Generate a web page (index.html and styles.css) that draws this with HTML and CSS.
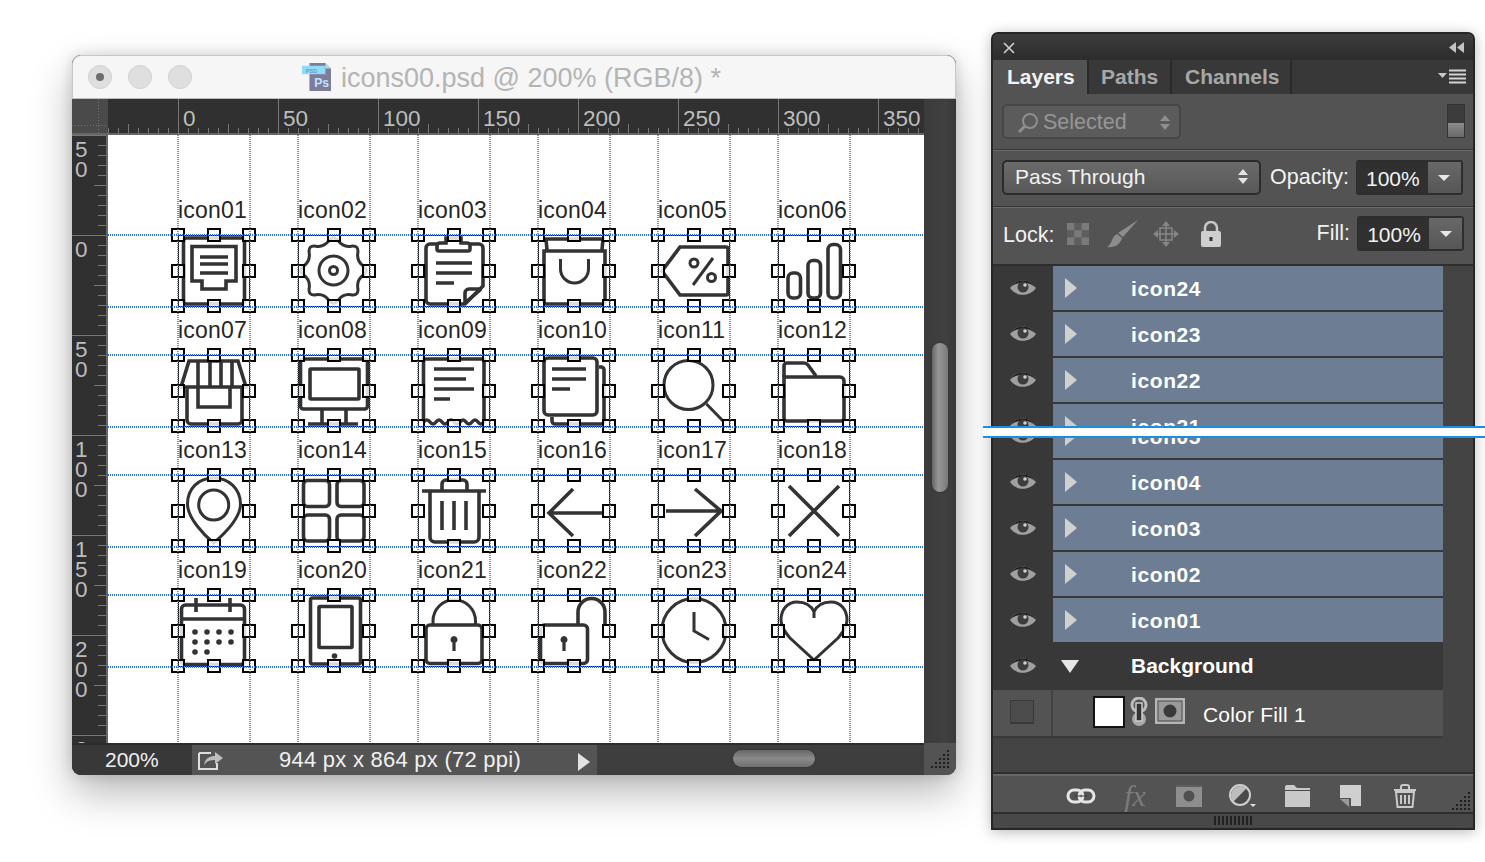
FILE: index.html
```html
<!DOCTYPE html>
<html lang="en">
<head>
    <meta charset="UTF-8">
    <title>icons00.psd</title>
    <link rel="stylesheet" href="styles.css">
</head>
<body>
    <!-- shared shapes -->
    <svg class="defs" width="0" height="0">
        <defs>
            <g id="handles" class="handles">
                <rect x="-6" y="-6" width="12" height="12"/><rect x="30" y="-6" width="12" height="12"/><rect x="65" y="-6" width="12" height="12"/>
                <rect x="-6" y="30" width="12" height="12"/><rect x="65" y="30" width="12" height="12"/>
                <rect x="-6" y="65" width="12" height="12"/><rect x="30" y="65" width="12" height="12"/><rect x="65" y="65" width="12" height="12"/>
            </g>
            <g id="eye">
                <path d="M0 10 C6 0 20 0 26 10 C20 19 6 19 0 10Z" fill="#a0a0a0"/>
                <path d="M0 10 C6 0 20 0 26 10 C20 3 6 3 0 10Z" fill="#1e1e1e"/>
                <circle cx="13" cy="9" r="5.5" fill="#3d3d3d"/>
                <circle cx="15" cy="7" r="1.8" fill="#d0d0d0"/>
            </g>
            <path id="updown" d="M5 0 L10 6 H0Z M0 9 H10 L5 15Z"/>
            <path id="caret" d="M0 0 H12 L6 6Z"/>
        </defs>
    </svg>

    <div class="doc">
        <div class="titlebar">
            <div class="traffic"><span class="light on"></span><span class="light"></span><span class="light"></span></div>
            <div class="doc-title">
                <svg class="psd" width="30" height="30" viewBox="0 0 32 32">
                    <path d="M9 1 H26 L32 7 V31 H9Z" fill="#7f7c9a"/>
                    <path d="M26 1 L32 7 H26Z" fill="#bcd9ee"/>
                    <rect x="1" y="4" width="25" height="9" fill="#8edcfa"/>
                    <text x="5" y="11.5" class="psd-small">PSD</text>
                    <text x="14" y="27" class="psd-big">Ps</text>
                </svg>
                <span>icons00.psd @ 200% (RGB/8) *</span>
            </div>
            <div></div>
        </div>

        <div class="workspace">
            <div class="ruler-corner"></div>
            <div class="ruler-top">
                <span>0</span><span>50</span><span>100</span><span>150</span><span>200</span><span>250</span><span>300</span><span>350</span>
            </div>
            <div class="vscroll"><div class="vthumb"></div></div>

            <div class="ruler-left">
                <div>5<br>0</div>
                <div>0</div>
                <div>5<br>0</div>
                <div>1<br>0<br>0</div>
                <div>1<br>5<br>0</div>
                <div>2<br>0<br>0</div>
                <div>2</div>
            </div>

            <div class="canvas">
                <div class="icons">
                    <div class="cell"><div class="label">icon01</div>
                        <svg class="ico" viewBox="0 0 72 72"><rect x="5.5" y="3" width="61" height="66" rx="3"/><path d="M14 11.5 H58 V46 H48 V54 H24 V46 H14Z"/><path d="M22 22 H50 M22 29 H50 M22 38 H50"/><use href="#handles"/></svg></div>
                    <div class="cell"><div class="label">icon02</div>
                        <svg class="ico thin" viewBox="0 0 72 72"><path d="M65.05 40.3 Q58.6 45.1 59.8 53.05 Q61 61 53.05 59.8 Q45.1 58.6 40.3 65.05 Q35.5 71.5 30.7 65.05 Q25.9 58.6 17.95 59.8 Q10 61 11.2 53.05 Q12.4 45.1 5.95 40.3 Q-.5 35.5 5.95 30.7 Q12.4 25.9 11.2 17.95 Q10 10 17.95 11.2 Q25.9 12.4 30.7 5.95 Q35.5 -.5 40.3 5.95 Q45.1 12.4 53.05 11.2 Q61 10 59.8 17.95 Q58.6 25.9 65.05 30.7 Q71.5 35.5 65.05 40.3Z"/><circle cx="35.5" cy="35.5" r="14.5"/><circle cx="35.5" cy="35.5" r="4"/><use href="#handles"/></svg></div>
                    <div class="cell"><div class="label">icon03</div>
                        <svg class="ico" viewBox="0 0 72 72"><path d="M19 9 H12 a4 4 0 0 0 -4 4 V65 a4 4 0 0 0 4 4 H47 L65 51 V13 a4 4 0 0 0 -4 -4 H52"/><path d="M28 3 H43 V8 H49 a3 3 0 0 1 3 3 V14 a2 2 0 0 1 -2 2 H21 a2 2 0 0 1 -2 -2 V11 a3 3 0 0 1 3 -3 H28Z"/><path d="M18 28 H54 M18 38 H54 M18 48 H36"/><path d="M47 69 V58 a4 4 0 0 1 4 -4 H64 M48 67 L62 55"/><use href="#handles"/></svg></div>
                    <div class="cell"><div class="label">icon04</div>
                        <svg class="ico" viewBox="0 0 72 72"><path d="M6 16 H67 V66 a3 3 0 0 1 -3 3 H9 a3 3 0 0 1 -3 -3Z"/><path d="M9 15 L8 4 H65 L64 15"/><path class="hair" d="M22.5 24 V34 a14 14 0 0 0 28 0 V24"/><use href="#handles"/></svg></div>
                    <div class="cell"><div class="label">icon05</div>
                        <svg class="ico" viewBox="0 0 72 72"><path d="M4 36 L22 12 H68 a2 2 0 0 1 2 2 V58 a2 2 0 0 1 -2 2 H22Z"/><circle class="hair" cx="36" cy="28" r="4"/><circle class="hair" cx="53.5" cy="42.5" r="4"/><path class="hair" d="M55 23 L35 50"/><use href="#handles"/></svg></div>
                    <div class="cell"><div class="label">icon06</div>
                        <svg class="ico" viewBox="0 0 72 72"><rect x="10" y="38" width="12.5" height="25" rx="5"/><rect x="30" y="25.5" width="12.5" height="37.5" rx="5"/><rect x="50" y="9.5" width="12.5" height="53.5" rx="5"/><use href="#handles"/></svg></div>

                    <div class="cell"><div class="label">icon07</div>
                        <svg class="ico" viewBox="0 0 72 72"><path d="M3 32 L11 6 H60 L68 32Z"/><path d="M20 6 V32 M32 6 V32 M43 6 V32 M54 6 V32"/><path d="M9 32 V65 a4 4 0 0 0 4 4 H60 a4 4 0 0 0 4 -4 V32"/><path d="M20 33 V52 H52 V33"/><use href="#handles"/></svg></div>
                    <div class="cell"><div class="label">icon08</div>
                        <svg class="ico" viewBox="0 0 72 72"><rect x="2.5" y="4" width="67" height="50" rx="3"/><rect x="12" y="14" width="49" height="30" rx="1"/><path d="M24 54 V68 M48 54 V68 M10 69 H60"/><use href="#handles"/></svg></div>
                    <div class="cell"><div class="label">icon09</div>
                        <svg class="ico" viewBox="0 0 72 72"><path d="M5.5 67 V4 H66 V67 Q63 71 60 67 T54 67 T48 67 T42 67 T36 67 T30 67 T24 67 T18 67 T12 67 T5.5 67"/><path d="M16 14 H56 M16 24 H48 M16 34 H56 M16 44 H32"/><use href="#handles"/></svg></div>
                    <div class="cell"><div class="label">icon10</div>
                        <svg class="ico" viewBox="0 0 72 72"><rect x="6" y="3" width="53" height="57" rx="4"/><path d="M61 12 H63 a3 3 0 0 1 3 3 V66 a3 3 0 0 1 -3 3 H17 a3 3 0 0 1 -3 -3 V62"/><path d="M14 14 H48 M14 24 H48 M14 34 H32"/><use href="#handles"/></svg></div>
                    <div class="cell"><div class="label">icon11</div>
                        <svg class="ico thin" viewBox="0 0 72 72"><circle cx="30.5" cy="30" r="24.5"/><path d="M48.5 49 L65.5 66.5"/><use href="#handles"/></svg></div>
                    <div class="cell"><div class="label">icon12</div>
                        <svg class="ico" viewBox="0 0 72 72"><path d="M6 22 H62 a4 4 0 0 1 4 4 V63 a3 3 0 0 1 -3 3 H9 a3 3 0 0 1 -3 -3Z"/><path d="M6 22 V11 a3 3 0 0 1 3 -3 H26 a5 5 0 0 1 4 2 L38 21"/><use href="#handles"/></svg></div>

                    <div class="cell"><div class="label">icon13</div>
                        <svg class="ico thin" viewBox="0 0 72 72"><path d="M35.7 3 C20 3 9.5 14 9.5 29 C9.5 43 26 60 35.7 68 C45 60 62.5 43 62.5 29 C62.5 14 51 3 35.7 3Z"/><circle cx="35.7" cy="30" r="15"/><use href="#handles"/></svg></div>
                    <div class="cell"><div class="label">icon14</div>
                        <svg class="ico" viewBox="0 0 72 72"><rect x="5.5" y="5.5" width="26" height="26" rx="4"/><rect x="39" y="5.5" width="27" height="26" rx="4"/><rect x="5.5" y="40" width="26" height="26" rx="4"/><rect x="39" y="40" width="27" height="26" rx="4"/><use href="#handles"/></svg></div>
                    <div class="cell"><div class="label">icon15</div>
                        <svg class="ico" viewBox="0 0 72 72"><path d="M4 16 H68"/><path d="M24 15 V9 a4 4 0 0 1 4 -4 H45 a4 4 0 0 1 4 4 V15"/><path d="M12 16 V62 a5 5 0 0 0 5 5 H56 a5 5 0 0 0 5 -5 V16"/><path d="M24 26 V55 M36 26 V55 M48 26 V55"/><use href="#handles"/></svg></div>
                    <div class="cell"><div class="label">icon16</div>
                        <svg class="ico" viewBox="0 0 72 72"><path d="M64 38 H11 M35 14 L11 38 L35 61"/><use href="#handles"/></svg></div>
                    <div class="cell"><div class="label">icon17</div>
                        <svg class="ico" viewBox="0 0 72 72"><path d="M8 36 H63 M37 14 L63 36 L37 61"/><use href="#handles"/></svg></div>
                    <div class="cell"><div class="label">icon18</div>
                        <svg class="ico" viewBox="0 0 72 72"><path d="M11 11 L61 61 M61 11 L11 61"/><use href="#handles"/></svg></div>

                    <div class="cell"><div class="label">icon19</div>
                        <svg class="ico" viewBox="0 0 72 72"><rect x="3.5" y="10" width="63" height="59.5" rx="4"/><path d="M3.5 24 H66.5 M18 3 V17 M52 3 V17"/><g class="solid"><circle cx="17" cy="37" r="2.8"/><circle cx="29" cy="37" r="2.8"/><circle cx="41" cy="37" r="2.8"/><circle cx="53" cy="37" r="2.8"/><circle cx="17" cy="47" r="2.8"/><circle cx="29" cy="47" r="2.8"/><circle cx="41" cy="47" r="2.8"/><circle cx="53" cy="47" r="2.8"/><circle cx="17" cy="57" r="2.8"/><circle cx="29" cy="57" r="2.8"/></g><use href="#handles"/></svg></div>
                    <div class="cell"><div class="label">icon20</div>
                        <svg class="ico" viewBox="0 0 72 72"><rect x="12.5" y="3" width="50" height="66" rx="2"/><rect x="21" y="11.5" width="33" height="41" rx="1"/><circle class="solid" cx="36.5" cy="61" r="2.8"/><use href="#handles"/></svg></div>
                    <div class="cell"><div class="label">icon21</div>
                        <svg class="ico" viewBox="0 0 72 72"><rect x="8" y="30" width="56" height="38.5" rx="4"/><path class="hair" d="M15 30 V26 a21 21 0 0 1 42.5 0 V30"/><path class="solid" d="M36 41 a3.5 3.5 0 0 1 1.6 6.6 V56 H34.4 V47.6 A3.5 3.5 0 0 1 36 41Z"/><use href="#handles"/></svg></div>
                    <div class="cell"><div class="label">icon22</div>
                        <svg class="ico" viewBox="0 0 72 72"><rect x="2.5" y="30" width="47" height="38.5" rx="4"/><path d="M40 30 V17 a13.5 13.5 0 0 1 27 0 V30"/><path class="solid" d="M26 41 a3.5 3.5 0 0 1 1.6 6.6 V56 H24.4 V47.6 A3.5 3.5 0 0 1 26 41Z"/><use href="#handles"/></svg></div>
                    <div class="cell"><div class="label">icon23</div>
                        <svg class="ico thin" viewBox="0 0 72 72"><circle cx="36" cy="35.5" r="32"/><path d="M36 17 V36 L51 44.5"/><use href="#handles"/></svg></div>
                    <div class="cell"><div class="label">icon24</div>
                        <svg class="ico thin" viewBox="0 0 72 72"><path d="M36 17 C33 10 26 7 19 7 C9 7 3 15 3 25 C3 33 8 38 12 43 L36 65 L60 43 C64 38 69 33 69 25 C69 15 63 7 53 7 C46 7 39 10 36 17 V23"/><use href="#handles"/></svg></div>
                </div>

                <svg class="guides" width="816" height="608">
                    <path class="guide-v" d="M70 0 V608 M142 0 V608 M190 0 V608 M262 0 V608 M310 0 V608 M382 0 V608 M430 0 V608 M502 0 V608 M550 0 V608 M622 0 V608 M670 0 V608 M742 0 V608"/>
                    <path class="guide-h" d="M0 100 H816 M0 172 H816 M0 220 H816 M0 292 H816 M0 340 H816 M0 412 H816 M0 460 H816 M0 532 H816"/>
                </svg>
            </div>

            <div class="status">
                <div class="zoom">200%</div>
                <div class="info">
                    <svg width="26" height="22" viewBox="0 0 26 22" class="share">
                        <path d="M1 4 H13 M1 4 V20 H19 V14" fill="none" stroke="#ddd" stroke-width="2"/>
                        <path d="M6 16 C7 9 12 7 17 7 V3 L25 9 L17 15 V11 C12 11 9 12 6 16Z" fill="#bdbdbd"/>
                    </svg>
                    <span class="size">944 px x 864 px (72 ppi)</span>
                    <svg width="12" height="18" viewBox="0 0 12 18" class="play"><path d="M0 0 L12 9 L0 18Z" fill="#e2e2e2"/></svg>
                </div>
                <div class="hscroll"><div class="hthumb"></div></div>
            </div>
            <div class="status-corner">
                <svg width="20" height="20" viewBox="0 0 20 20"><path d="M17 1h2v2h-2z M13 5h2v2h-2z M17 5h2v2h-2z M9 9h2v2H9z M13 9h2v2h-2z M17 9h2v2h-2z M5 13h2v2H5z M9 13h2v2H9z M13 13h2v2h-2z M17 13h2v2h-2z M1 17h2v2H1z M5 17h2v2H5z M9 17h2v2H9z M13 17h2v2h-2z M17 17h2v2h-2z" fill="#1f1f1f"/></svg>
            </div>
        </div>
    </div>

    <div class="panel">
        <div class="panel-top">
            <svg width="12" height="12" viewBox="0 0 12 12"><path d="M1 1 L11 11 M11 1 L1 11" stroke="#d0d0d0" stroke-width="1.6"/></svg>
            <svg width="15" height="11" viewBox="0 0 15 11"><path d="M7 0 V11 L0 5.5Z M15 0 V11 L8 5.5Z" fill="#c4c4c4"/></svg>
        </div>
        <div class="tabs">
            <div class="tab active">Layers</div>
            <div class="tab">Paths</div>
            <div class="tab">Channels</div>
            <svg class="panel-menu" width="29" height="16" viewBox="0 0 29 16"><path d="M0 4 H9 L4.5 9Z" fill="#c8c8c8"/><path d="M11 1.5 H28 M11 5.5 H28 M11 9.5 H28 M11 13.5 H28" stroke="#d4d4d4" stroke-width="2"/></svg>
        </div>

        <div class="filter-row">
            <div class="select kind">
                <svg width="22" height="22" viewBox="0 0 22 22"><circle cx="13" cy="9" r="7" fill="none" stroke="#8e8e8e" stroke-width="2"/><path d="M8 14 L2 20" stroke="#8e8e8e" stroke-width="3"/></svg>
                <span>Selected</span>
                <svg class="updown" width="10" height="15" viewBox="0 0 10 15"><use href="#updown"/></svg>
            </div>
            <div class="filter-switch"><div></div></div>
        </div>

        <div class="opts blend-row">
            <div class="select blend">
                <span>Pass Through</span>
                <svg class="updown" width="10" height="15" viewBox="0 0 10 15"><use href="#updown"/></svg>
            </div>
            <span class="opt-label">Opacity:</span>
            <div class="percent"><div class="value">100%</div><div class="drop"><svg width="12" height="6" viewBox="0 0 12 6"><use href="#caret"/></svg></div></div>
        </div>

        <div class="opts lock-row">
            <span class="opt-label lock-label">Lock:</span>
            <div class="lock-icons">
                <svg width="22" height="22" viewBox="0 0 22 22"><rect width="22" height="22" fill="#7a7a7a"/><path d="M7.3 0 H14.6 V7.3 H7.3Z M0 7.3 H7.3 V14.6 H0Z M14.6 7.3 H22 V14.6 H14.6Z M7.3 14.6 H14.6 V22 H7.3Z" fill="#5e5e5e"/></svg>
                <svg width="32" height="28" viewBox="0 0 32 28"><path d="M31 0 L16 17 L11 13Z" fill="#8d8d8d"/><path d="M10 14 L15 18 C13 25 7 28 0 27 C5 25 4 17 10 14Z" fill="#8d8d8d"/></svg>
                <svg width="28" height="28" viewBox="0 0 28 28"><path d="M14 1 L18 6 H10Z M14 27 L18 22 H10Z M1 14 L6 10 V18Z M27 14 L22 10 V18Z" fill="#868686"/><path d="M14 5 V23 M5 14 H23" stroke="#868686" stroke-width="1.5"/><rect x="8" y="8" width="12" height="12" fill="none" stroke="#868686" stroke-width="1.5"/></svg>
                <svg width="20" height="26" viewBox="0 0 20 26"><path d="M4 11 V7 a6 6 0 0 1 12 0 V11" fill="none" stroke="#c8c8c8" stroke-width="2.5"/><rect y="10" width="20" height="16" rx="2" fill="#cfcfcf"/><rect x="8.5" y="16" width="3" height="4" fill="#333"/></svg>
            </div>
            <span class="opt-label fill-label">Fill:</span>
            <div class="percent"><div class="value">100%</div><div class="drop"><svg width="12" height="6" viewBox="0 0 12 6"><use href="#caret"/></svg></div></div>
        </div>

        <div class="layers">
            <div class="row"><div class="vis"><svg width="26" height="19" viewBox="0 0 26 19"><use href="#eye"/></svg></div><div class="name"><i class="arrow"></i><b>icon24</b></div></div>
            <div class="row"><div class="vis"><svg width="26" height="19" viewBox="0 0 26 19"><use href="#eye"/></svg></div><div class="name"><i class="arrow"></i><b>icon23</b></div></div>
            <div class="row"><div class="vis"><svg width="26" height="19" viewBox="0 0 26 19"><use href="#eye"/></svg></div><div class="name"><i class="arrow"></i><b>icon22</b></div></div>
            <div class="row cut-upper"><div class="vis"><svg width="26" height="19" viewBox="0 0 26 19"><use href="#eye"/></svg></div><div class="name"><i class="arrow"></i><b>icon21</b></div></div>
            <div class="seam"></div>
            <div class="row cut-lower"><div class="vis"><svg width="26" height="19" viewBox="0 0 26 19"><use href="#eye"/></svg></div><div class="name"><i class="arrow"></i><b>icon05</b></div></div>
            <div class="row"><div class="vis"><svg width="26" height="19" viewBox="0 0 26 19"><use href="#eye"/></svg></div><div class="name"><i class="arrow"></i><b>icon04</b></div></div>
            <div class="row"><div class="vis"><svg width="26" height="19" viewBox="0 0 26 19"><use href="#eye"/></svg></div><div class="name"><i class="arrow"></i><b>icon03</b></div></div>
            <div class="row"><div class="vis"><svg width="26" height="19" viewBox="0 0 26 19"><use href="#eye"/></svg></div><div class="name"><i class="arrow"></i><b>icon02</b></div></div>
            <div class="row"><div class="vis"><svg width="26" height="19" viewBox="0 0 26 19"><use href="#eye"/></svg></div><div class="name"><i class="arrow"></i><b>icon01</b></div></div>
            <div class="row group"><div class="vis"><svg width="26" height="19" viewBox="0 0 26 19"><use href="#eye"/></svg></div><div class="name"><i class="arrow down"></i><b>Background</b></div></div>
            <div class="row fill-layer">
                <div class="vis"><span class="check"></span></div>
                <div class="name">
                    <span class="thumb"></span>
                    <svg class="chain" width="18" height="30" viewBox="0 0 18 30"><rect x="2" y="1" width="14" height="14" rx="7" fill="none" stroke="#bcbcbc" stroke-width="3"/><rect x="2" y="15" width="14" height="14" rx="7" fill="#a8a8a8"/><rect x="6" y="6" width="6" height="18" fill="#333" stroke="#ccc" stroke-width="1.5"/></svg>
                    <svg class="mask" width="30" height="26" viewBox="0 0 30 26"><rect width="30" height="26" fill="#b5b5b5"/><rect x="3" y="3" width="24" height="20" fill="#9a9a9a"/><rect x="3" y="3" width="24" height="20" fill="none" stroke="#4a4a4a" stroke-width="1"/><circle cx="15" cy="13" r="6.5" fill="#3a3a3a"/></svg>
                    <span class="fill-name">Color Fill 1</span>
                </div>
            </div>
            <div class="empty"></div>
        </div>

        <div class="toolbar">
            <div class="tool"><svg width="30" height="18" viewBox="0 0 30 18"><rect x="2" y="3" width="15" height="12" rx="6" fill="none" stroke="#e6e6e6" stroke-width="3"/><rect x="13" y="3" width="15" height="12" rx="6" fill="none" stroke="#e6e6e6" stroke-width="3"/><path d="M9 9 H21" stroke="#333" stroke-width="1"/></svg></div>
            <div class="tool"><span class="fx">fx</span></div>
            <div class="tool"><svg width="26" height="22" viewBox="0 0 26 22"><rect width="26" height="22" fill="#8e8e8e"/><rect y="0" width="26" height="2" fill="#5e5e5e"/><circle cx="13" cy="11" r="5.5" fill="#505050"/></svg></div>
            <div class="tool"><svg width="28" height="24" viewBox="0 0 28 24"><circle cx="11" cy="11" r="10" fill="#4a4a4a" stroke="#cfcfcf" stroke-width="2"/><path d="M4.3 17.7 A9.5 9.5 0 0 1 17.7 4.3Z" fill="#bdbdbd"/><path d="M21 20 H27 L24 23Z" fill="#e0e0e0"/></svg></div>
            <div class="tool"><svg width="25" height="22" viewBox="0 0 25 22"><path d="M0 2 a2 2 0 0 1 2 -2 H9 L12 3 H25 V22 H0Z" fill="#c9c9c9"/><rect y="5" width="25" height="1" fill="#4a4a4a"/></svg></div>
            <div class="tool"><svg width="22" height="22" viewBox="0 0 22 22"><path d="M0 0 H21 V21 H11 V13 H0Z" fill="#cfcfcf"/><path d="M0 14 L9 14 V22Z" fill="#999"/></svg></div>
            <div class="tool"><svg width="24" height="24" viewBox="0 0 24 24"><path d="M1 6 H23 M8 6 V3 a2 2 0 0 1 2 -2 H14 a2 2 0 0 1 2 2 V6" fill="none" stroke="#c9c9c9" stroke-width="2"/><path d="M3 8 H21 L19.5 23 H4.5Z" fill="none" stroke="#c9c9c9" stroke-width="2"/><path d="M8 11 V20 M12 11 V20 M16 11 V20" stroke="#c9c9c9" stroke-width="2"/></svg></div>
            <svg class="panel-grip" width="20" height="20" viewBox="0 0 20 20"><path d="M17 1h2v2h-2z M13 5h2v2h-2z M17 5h2v2h-2z M9 9h2v2H9z M13 9h2v2h-2z M17 9h2v2h-2z M5 13h2v2H5z M9 13h2v2H9z M13 13h2v2h-2z M17 13h2v2h-2z M1 17h2v2H1z M5 17h2v2H5z M9 17h2v2H9z M13 17h2v2h-2z M17 17h2v2h-2z" fill="#1f1f1f"/></svg>
        </div>
        <div class="panel-foot"><div class="foot-grip"></div></div>
    </div>
</body>
</html>
```
FILE: styles.css
```css
* {
    box-sizing: border-box;
}
html, body {
    height: 100%;
}
body {
    margin: 0;
    padding: 32px 0 0 72px;
    background-color: #fff;
    font-family: "Liberation Sans", Arial, sans-serif;
    display: flex;
    align-items: flex-start;
    gap: 35px;
    overflow: hidden;
}
.defs {
    position: absolute;
}

/* document window */
.doc {
    width: 884px;
    height: 720px;
    margin-top: 23px;
    border-radius: 9px;
    overflow: hidden;
    background-color: #3a3a3a;
    box-shadow: 0 18px 40px rgba(0, 0, 0, 0.28), 0 0 14px rgba(0, 0, 0, 0.14);
}
.titlebar {
    height: 44px;
    display: grid;
    grid-template-columns: 1fr auto 1fr;
    align-items: center;
    background-color: #f6f6f6;
    border: 1px solid #c8c8c8;
    border-bottom: 1px solid #bdbdbd;
    border-radius: 9px 9px 0 0;
}
.traffic {
    display: flex;
    gap: 16px;
    padding-left: 15px;
}
.light {
    width: 24px;
    height: 24px;
    border-radius: 50%;
    background-color: #dfdfdf;
    border: 1px solid #d2d2d2;
    display: flex;
    align-items: center;
    justify-content: center;
}
.light.on::after {
    content: "";
    width: 8px;
    height: 8px;
    border-radius: 50%;
    background-color: #6e6e6e;
}
.doc-title {
    display: flex;
    align-items: center;
    gap: 10px;
    padding-right: 6px;
    font-size: 27px;
    color: #b4b4b4;
}
.doc-title span {
    padding-top: 2px;
}
.psd-small {
    font-size: 6px;
    fill: #5a8aa8;
}
.psd-big {
    font-size: 13px;
    font-weight: bold;
    fill: #b9e6ff;
}

.workspace {
    display: grid;
    grid-template-columns: 36px 816px 32px;
    grid-template-rows: 36px 608px 32px;
    height: 676px;
}
.ruler-corner {
    background-color: #4a4a4a;
    background-image:
        repeating-linear-gradient(to bottom, #777 0 1px, transparent 1px 3px),
        repeating-linear-gradient(to right, #777 0 1px, transparent 1px 3px);
    background-size: 1px 100%, 100% 1px;
    background-position: 26px 0, 0 26px;
    background-repeat: no-repeat;
    border-bottom: 2px solid #666;
}
.ruler-top {
    display: flex;
    padding-left: 70px;
    overflow: hidden;
    color: #bdbdbd;
    font-size: 22.5px;
    background-color: #303030;
    background-image:
        linear-gradient(#666, #666),
        repeating-linear-gradient(to right, #777 0 1px, transparent 1px 50px),
        repeating-linear-gradient(to right, #777 0 1px, transparent 1px 10px);
    background-size: 100% 2px, 100% 9px, 100% 5px;
    background-position: 0 100%, 20px calc(100% - 2px), 0 calc(100% - 2px);
    background-repeat: no-repeat;
}
.ruler-top span {
    flex: 0 0 100px;
    border-left: 1px solid #777;
    padding-left: 4px;
    line-height: 39px;
}
.ruler-left {
    overflow: hidden;
    color: #bdbdbd;
    font-size: 22.5px;
    line-height: 20px;
    background-color: #303030;
    background-image:
        linear-gradient(#666, #666),
        repeating-linear-gradient(to bottom, #777 0 1px, transparent 1px 50px),
        repeating-linear-gradient(to bottom, #777 0 1px, transparent 1px 10px);
    background-size: 2px 100%, 12px 100%, 8px 100%;
    background-position: 100% 0, calc(100% - 2px) 0, calc(100% - 2px) 0;
    background-repeat: no-repeat;
}
.ruler-left div {
    height: 100px;
    padding: 4px 0 0 3px;
    border-top: 1px solid #777;
    margin-right: 10px;
}
.canvas {
    position: relative;
    background-color: #fff;
    overflow: hidden;
}
.icons {
    display: grid;
    grid-template-columns: repeat(6, 72px);
    grid-auto-rows: 120px;
    column-gap: 48px;
    padding: 52px 0 0 70px;
}
.cell {
    display: flex;
    flex-direction: column;
}
.label {
    height: 48px;
    padding-top: 10px;
    font-size: 23px;
    letter-spacing: 0.2px;
    line-height: 26px;
    color: #262626;
    white-space: nowrap;
}
.ico {
    width: 72px;
    height: 72px;
    overflow: visible;
    fill: none;
    stroke: #333;
    stroke-width: 3.6;
    outline: 1px solid #0b1220;
    outline-offset: -1px;
}
.ico.thin {
    stroke-width: 3;
}
.ico .hair {
    stroke-width: 3;
}
.ico .solid {
    fill: #333;
    stroke: none;
}
.handles rect {
    fill: rgba(255, 255, 255, 0.82);
    stroke: #000;
    stroke-width: 2;
}
.guides {
    position: absolute;
    left: 0;
    top: 0;
    fill: none;
    stroke: #2a70f8;
    stroke-dasharray: 1 1;
}
.guide-v {
    stroke-width: 1.5;
}
.guide-h {
    stroke-width: 2;
}
.vscroll {
    grid-column: 3;
    grid-row: 1 / 3;
    padding: 244px 8px 0;
    background: linear-gradient(to right, #3b3b3b, #404040 70%, #383838);
}
.vthumb {
    height: 149px;
    border-radius: 8px;
    background: linear-gradient(to right, #666, #969696 40%, #7a7a7a);
    box-shadow: 0 0 2px #2a2a2a;
}

/* status bar */
.status {
    grid-column: 1 / 3;
    grid-row: 3;
    display: flex;
    color: #f0f0f0;
    background-color: #3e3e3e;
    border-top: 2px solid #2c2c2c;
}
.zoom {
    flex: 0 0 120px;
    padding-left: 33px;
    background-color: #383838;
    font-size: 21px;
    line-height: 30px;
}
.info {
    flex: 0 0 405px;
    display: flex;
    align-items: center;
    padding-left: 6px;
    background-color: #545454;
    font-size: 22px;
    letter-spacing: 0.25px;
}
.size {
    margin-left: 55px;
    white-space: nowrap;
}
.play {
    margin-left: 57px;
    margin-top: 4px;
}
.hscroll {
    flex: 1;
    padding: 5px 0 0 136px;
}
.hthumb {
    width: 82px;
    height: 17px;
    border-radius: 9px;
    background: linear-gradient(to bottom, #666, #8a8a8a 50%, #707070);
    box-shadow: 0 0 2px #2a2a2a;
}
.status-corner {
    grid-column: 3;
    grid-row: 3;
    display: flex;
    align-items: flex-end;
    justify-content: flex-end;
    padding: 0 6px 6px 0;
    background-color: #535353;
}

/* layers panel */
.panel {
    width: 484px;
    height: 798px;
    display: flex;
    flex-direction: column;
    background-color: #535353;
    border: 2px solid #262626;
    border-radius: 7px 7px 0 0;
    box-shadow: 0 2px 14px rgba(0, 0, 0, 0.28);
    color: #f2f2f2;
}
.panel-top {
    flex: 0 0 26px;
    display: flex;
    align-items: center;
    justify-content: space-between;
    padding: 1px 9px 0 10px;
    background: linear-gradient(to bottom, #3c3c3c, #2c2c2c);
    border-radius: 5px 5px 0 0;
}
.tabs {
    flex: 0 0 34px;
    display: flex;
    align-items: stretch;
    position: relative;
    background-color: #383838;
    font-size: 21px;
    font-weight: bold;
    color: #a8a8a8;
    line-height: 34px;
}
.tab {
    padding: 0 12px;
    border-right: 2px solid #2a2a2a;
}
.tab.active {
    width: 96px;
    padding-left: 14px;
    background-color: #535353;
    color: #f2f2f2;
}
.tabs .tab:nth-child(2) { width: 83px; }
.tabs .tab:nth-child(3) { width: 120px; padding-left: 13px; }
.panel-menu {
    margin: 9px 6px 0 auto;
}
.filter-row {
    flex: 0 0 56px;
    display: flex;
    align-items: flex-start;
    justify-content: space-between;
    padding: 10px 8px 0 9px;
    border-bottom: 1px solid #383838;
    box-shadow: 0 1px 0 #6a6a6a;
}
.select {
    height: 35px;
    display: flex;
    align-items: center;
    border-radius: 5px;
    font-size: 21px;
}
.kind {
    width: 179px;
    padding: 2px 9px 0 13px;
    gap: 4px;
    color: #969696;
    background: #5b5b5b;
    border: 2px solid #464646;
    font-size: 21.5px;
}
.kind .updown {
    margin-left: auto;
    fill: #8f8f8f;
}
.filter-switch {
    width: 18px;
    height: 34px;
    padding-top: 18px;
    background-color: #3c3c3c;
    border: 1px solid #333;
}
.filter-switch div {
    height: 14px;
    background: linear-gradient(to bottom, #8a8a8a, #6a6a6a);
}
.opts {
    display: flex;
    align-items: flex-start;
    padding: 10px 9px 0 9px;
}
.blend-row {
    flex: 0 0 57px;
    border-bottom: 1px solid #383838;
    box-shadow: 0 1px 0 #6a6a6a;
}
.lock-row {
    flex: 0 0 57px;
    padding-left: 10px;
    padding-top: 9px;
}
.blend {
    width: 259px;
    padding: 0 11px 2px;
    justify-content: space-between;
    background: linear-gradient(to bottom, #6a6a6a, #585858);
    border: 2px solid #2b2b2b;
    white-space: nowrap;
}
.blend .updown {
    fill: #e4e4e4;
}
.opt-label {
    font-size: 21.5px;
    line-height: 33px;
    white-space: nowrap;
}
.blend-row .opt-label {
    margin: 1px 7px 0 9px;
}
.lock-label {
    margin-top: 3px;
}
.percent {
    flex: 0 0 107px;
    height: 35px;
    display: flex;
    border-radius: 3px;
    border: 2px solid #2e2e2e;
}
.value {
    flex: 0 0 70px;
    background-color: #303030;
    font-size: 21px;
    line-height: 33px;
    text-align: center;
}
.drop {
    flex: 1;
    display: flex;
    align-items: center;
    justify-content: center;
    background: linear-gradient(to bottom, #686868, #565656);
    fill: #e8e8e8;
}
.lock-icons {
    display: flex;
    align-items: center;
    height: 36px;
    margin-left: 13px;
    gap: 18px;
}
.lock-icons svg:nth-child(3) { margin-left: -5px; }
.lock-icons svg:nth-child(4) { margin-left: 3px; }
.fill-label {
    margin: 1px 7px 0 auto;
}

.layers {
    flex: 1;
    display: flex;
    flex-direction: column;
    padding: 2px 30px 0 0;
    background-color: #444;
    background-image: linear-gradient(#2e2e2e, #2e2e2e);
    background-size: 100% 2px;
    background-repeat: no-repeat;
}
.row {
    flex: 0 0 46px;
    display: grid;
    grid-template-columns: 60px 1fr;
    grid-template-rows: 44px;
    background-color: #383838;
    border-bottom: 2px solid #383838;
}
.vis {
    display: flex;
    align-items: center;
    justify-content: center;
}
.vis svg {
    margin-top: -2px;
}
.name {
    display: flex;
    align-items: center;
    background-color: #6c7d94;
    font-size: 21px;
    color: #fff;
}
.name b {
    margin-left: 54px;
    margin-top: 1px;
    letter-spacing: 0.6px;
}
.arrow {
    width: 0;
    height: 0;
    margin: 0 0 0 12px;
    border-style: solid;
    border-width: 10px 0 10px 12px;
    border-color: transparent transparent transparent #d0d0d0;
}
.arrow.down {
    margin-left: 8px;
    border-width: 13px 9px 0;
    border-color: #e6e6e6 transparent transparent;
}
.arrow.down + b {
    margin-left: 52px;
    margin-top: 0;
    letter-spacing: 0;
}
.cut-upper {
    flex: 0 0 22px;
    overflow: hidden;
    border-bottom: 0;
}
.cut-lower {
    flex: 0 0 22px;
    align-content: end;
    overflow: hidden;
}
.seam {
    flex: 0 0 12px;
    margin: 0 -42px 0 -10px;
    position: relative;
    background-color: #fff;
    border-top: 2px solid #1a8fe8;
    border-bottom: 2px solid #1a8fe8;
}
.group {
    grid-template-rows: 44px;
    border-bottom: 0;
}
.group .name {
    background-color: #383838;
}
.fill-layer {
    flex: 0 0 48px;
    grid-template-rows: 46px;
    border-bottom: 2px solid #3a3a3a;
}
.fill-layer .vis {
    padding-bottom: 2px;
    background-color: #535353;
    border-right: 2px solid #444;
}
.fill-layer .name {
    background-color: #535353;
    padding: 0 0 2px 40px;
}
.check {
    width: 24px;
    height: 24px;
    border: 1px solid #3a3a3a;
    border-bottom-width: 2px;
    background-color: #4c4c4c;
}
.thumb {
    width: 32px;
    height: 32px;
    background-color: #fff;
    border: 2px solid #111;
}
.chain {
    margin-left: 5px;
}
.mask {
    margin-left: 7px;
    margin-top: -3px;
}
.fill-name {
    margin-left: 18px;
    margin-top: 5px;
    letter-spacing: 0.2px;
    white-space: nowrap;
}
.empty {
    flex: 1;
    background-color: #444;
}
.toolbar {
    flex: 0 0 40px;
    display: flex;
    align-items: center;
    position: relative;
    padding: 6px 0 0 61px;
    background-color: #535353;
    border-top: 2px solid #2e2e2e;
    box-shadow: inset 0 2px 0 #666;
}
.tool {
    flex: 0 0 54px;
    display: flex;
    justify-content: center;
    align-items: center;
}
.fx {
    font-family: "Liberation Serif", serif;
    font-style: italic;
    font-size: 30px;
    line-height: 30px;
    color: #7c7c7c;
}
.panel-grip {
    position: absolute;
    right: 2px;
    bottom: 1px;
}
.panel-foot {
    flex: 0 0 16px;
    display: flex;
    align-items: center;
    justify-content: center;
    padding-bottom: 2px;
    background-color: #484848;
    border-top: 2px solid #2e2e2e;
}
.foot-grip {
    width: 39px;
    height: 9px;
    background-image: repeating-linear-gradient(to right, #222 0 2px, transparent 2px 4px);
}
```
